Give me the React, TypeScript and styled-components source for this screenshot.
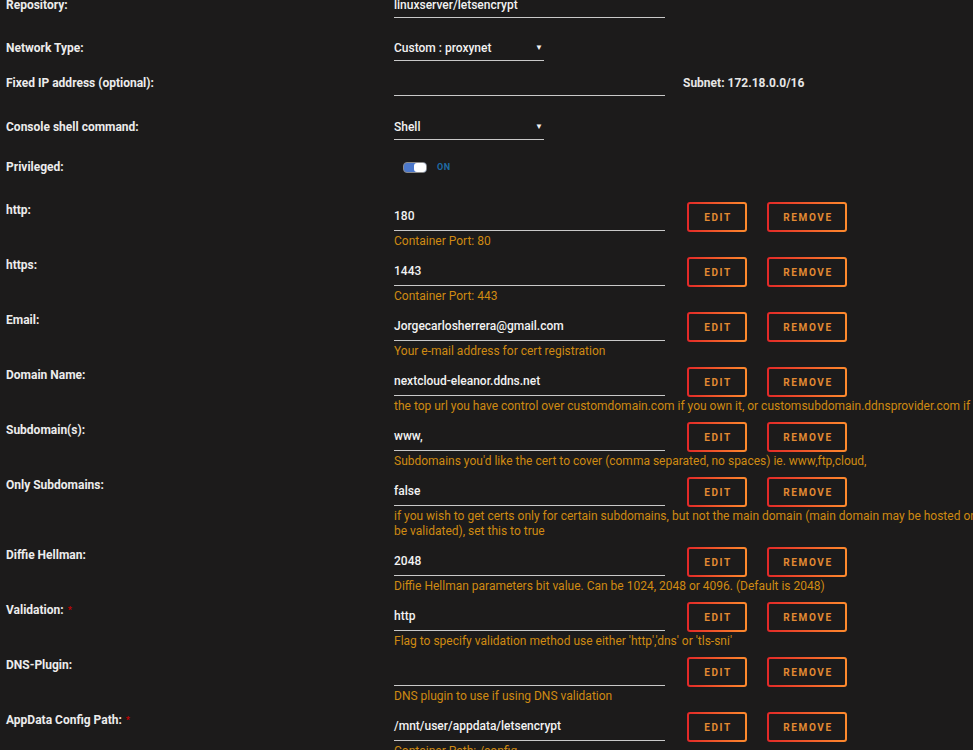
import React from "react";
import styled, { createGlobalStyle } from "styled-components";

type Config = {
  label: string;
  value: string;
  desc: string;
  required?: boolean;
};

const configs: Config[] = [
  { label: "http:", value: "180", desc: "Container Port: 80" },
  { label: "https:", value: "1443", desc: "Container Port: 443" },
  { label: "Email:", value: "Jorgecarlosherrera@gmail.com", desc: "Your e-mail address for cert registration" },
  {
    label: "Domain Name:",
    value: "nextcloud-eleanor.ddns.net",
    desc: "the top url you have control over customdomain.com if you own it, or customsubdomain.ddnsprovider.com if using dynamic dns",
  },
  {
    label: "Subdomain(s):",
    value: "www,",
    desc: "Subdomains you'd like the cert to cover (comma separated, no spaces) ie. www,ftp,cloud,",
  },
  {
    label: "Only Subdomains:",
    value: "false",
    desc: "if you wish to get certs only for certain subdomains, but not the main domain (main domain may be hosted on another machine and cannot be validated), set this to true",
  },
  {
    label: "Diffie Hellman:",
    value: "2048",
    desc: "Diffie Hellman parameters bit value. Can be 1024, 2048 or 4096. (Default is 2048)",
  },
  {
    label: "Validation:",
    value: "http",
    desc: "Flag to specify validation method use either 'http','dns' or 'tls-sni'",
    required: true,
  },
  { label: "DNS-Plugin:", value: "", desc: "DNS plugin to use if using DNS validation" },
  {
    label: "AppData Config Path:",
    value: "/mnt/user/appdata/letsencrypt",
    desc: "Container Path: /config",
    required: true,
  },
];

function App() {
  return (
    <>
      <GlobalStyle />
      <Page>
        <Row $h={43}>
          <Label>Repository:</Label>
          <TextValue $w={271}>linuxserver/letsencrypt</TextValue>
        </Row>
        <Row $h={35}>
          <Label>Network Type:</Label>
          <SelectValue $w={150}>
            Custom : proxynet
            <Arrow>▼</Arrow>
          </SelectValue>
        </Row>
        <Row $h={44}>
          <Label>Fixed IP address (optional):</Label>
          <TextValue $w={271}>&nbsp;</TextValue>
          <Subnet>Subnet: 172.18.0.0/16</Subnet>
        </Row>
        <Row $h={40}>
          <Label>Console shell command:</Label>
          <SelectValue $w={150}>
            Shell
            <Arrow>▼</Arrow>
          </SelectValue>
        </Row>
        <Row $h={43}>
          <Label>Privileged:</Label>
          <Toggle>
            <Track>
              <Knob />
            </Track>
            <ToggleText>ON</ToggleText>
          </Toggle>
        </Row>

        {configs.map((c) => (
          <ConfigRow key={c.label}>
            <Label>
              {c.label}
              {c.required && <Req>*</Req>}
            </Label>
            <ConfigField>
              <InputLine>
                <ConfigInput>{c.value}</ConfigInput>
                <Button $w={60}>EDIT</Button>
                <Button $w={80}>REMOVE</Button>
              </InputLine>
              <Desc>{c.desc}</Desc>
            </ConfigField>
          </ConfigRow>
        ))}
      </Page>
    </>
  );
}

export default App;

const GlobalStyle = createGlobalStyle`
  html, body {
    margin: 0;
    background: #1c1b1b;
    overflow: hidden;
  }
  body {
    font-family: Roboto, "Liberation Sans", sans-serif;
    font-size: 12px;
    color: #f2f2f2;
  }
`;
const Page = styled.div`
  width: 1200px;
  margin-top: -2px;
`;
const Row = styled.div<{ $h: number }>`
  display: flex;
  align-items: flex-start;
  height: ${(p) => p.$h}px;
`;
const Label = styled.div`
  width: 394px;
  flex-shrink: 0;
  box-sizing: border-box;
  padding-left: 6px;
  line-height: 14px;
  font-weight: 700;
  color: #ececec;
`;
const TextValue = styled.div<{ $w: number }>`
  width: ${(p) => p.$w}px;
  line-height: 14px;
  padding-bottom: 5px;
  border-bottom: 1px solid #c9c9c9;
  color: #f2f2f2;
  font-weight: 500;
`;
const SelectValue = styled(TextValue)`
  display: flex;
  justify-content: space-between;
  box-sizing: border-box;
`;
const Arrow = styled.span`
  font-size: 8px;
  padding-right: 1px;
  color: #f2f2f2;
`;
const Subnet = styled.div`
  margin-left: 18px;
  line-height: 14px;
  font-weight: 700;
  color: #e6e6e6;
`;
const Toggle = styled.div`
  display: flex;
  align-items: center;
  gap: 10px;
  margin-left: 9px;
  height: 14px;
`;
const Track = styled.div`
  width: 24px;
  height: 11px;
  box-sizing: border-box;
  border-radius: 4px;
  background: #4c78cb;
  border: 1px solid #8a8a8a;
  display: flex;
  justify-content: flex-end;
`;
const Knob = styled.div`
  width: 12px;
  height: 9px;
  border-radius: 3px;
  background: #ffffff;
`;
const ToggleText = styled.span`
  font-size: 9px;
  font-weight: 700;
  letter-spacing: 0.5px;
  color: #1f6aa3;
`;
const ConfigRow = styled.div`
  display: flex;
  align-items: flex-start;
  margin-bottom: 9px;
`;
const ConfigField = styled.div`
  display: flex;
  flex-direction: column;
`;
const InputLine = styled.div`
  display: flex;
  align-items: flex-start;
  gap: 20px;
  height: 30px;
`;
const ConfigInput = styled.div`
  width: 271px;
  height: 27px;
  line-height: 27px;
  margin-right: 2px;
  border-bottom: 1px solid #c9c9c9;
  color: #f2f2f2;
  font-weight: 500;
  white-space: nowrap;
`;
const Button = styled.div<{ $w: number }>`
  width: ${(p) => p.$w}px;
  height: 30px;
  margin-top: -1px;
  box-sizing: border-box;
  border: 2px solid transparent;
  border-radius: 3px;
  background: linear-gradient(#1c1b1b, #1c1b1b) padding-box,
    linear-gradient(90deg, #e22828 0%, #ff8b2d 100%) border-box;
  display: flex;
  align-items: center;
  justify-content: center;
  font-size: 10px;
  font-weight: 700;
  letter-spacing: 1.6px;
  padding-left: 2px;
  color: #e38a32;
`;
const Desc = styled.div`
  width: 750px;
  padding-top: 1px;
  line-height: 15px;
  color: #cf8a12;
`;
const Req = styled.span`
  color: #c40000;
  font-size: 9px;
  margin-left: 4px;
  vertical-align: top;
`;
